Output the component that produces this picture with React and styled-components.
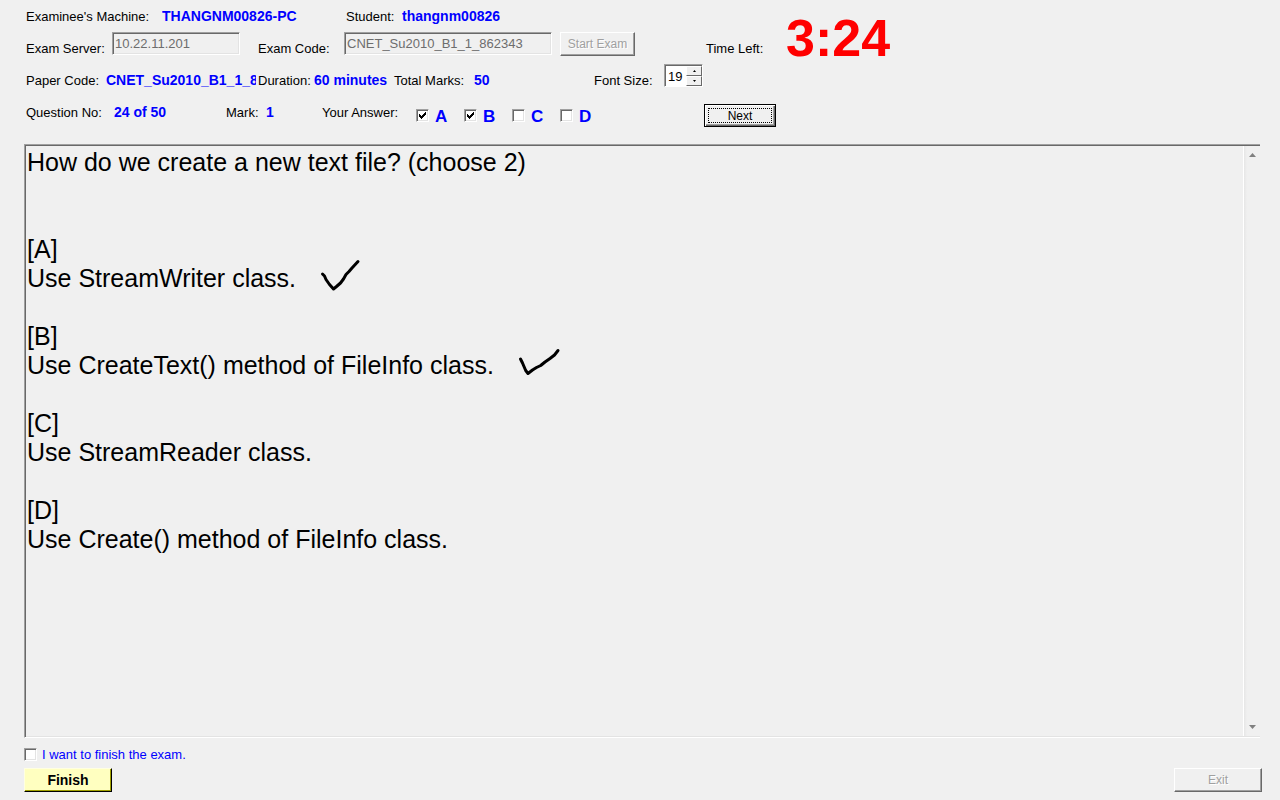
import React, { useState } from "react";
import styled, { createGlobalStyle } from "styled-components";

const GlobalStyle = createGlobalStyle`
  *, *::before, *::after { box-sizing: border-box; }
  body {
    margin: 0;
    background: #f0f0f0;
    color: #000;
    font-family: "Liberation Sans", Arial, sans-serif;
    font-size: 13px;
  }
  button, input { font-family: inherit; margin: 0; }
`;

const Page = styled.main`
  display: flex;
  flex-direction: column;
  min-height: 100vh;
`;

const Header = styled.header`
  display: flex;
  padding: 0 0 16px 26px;
`;

const Details = styled.div`
  flex: none;
  width: 678px;
`;

const Row = styled.div`
  display: flex;
  align-items: flex-start;
  height: 32px;
  line-height: 34px;
  white-space: nowrap;
`;

const Label = styled.label`
  flex: none;
  width: ${(p) => p.$w}px;
`;

const Value = styled.strong`
  flex: none;
  width: ${(p) => (p.$w ? `${p.$w}px` : "auto")};
  overflow: hidden;
  color: #0000ff;
  font-size: 14px;
  line-height: 32px;
`;

const Gap = styled.span`
  flex: none;
  width: ${(p) => p.$w}px;
`;

const TextField = styled.input`
  flex: none;
  width: ${(p) => p.$w}px;
  height: 23px;
  padding: 0 2px;
  border: 1px solid;
  border-color: #a0a0a0 #fff #fff #a0a0a0;
  box-shadow: inset 1px 1px 0 #696969, inset -1px -1px 0 #e3e3e3;
  background: #f0f0f0;
  color: #6d6d6d;
  font-size: 13px;
`;

const Button = styled.button`
  flex: none;
  width: ${(p) => p.$w}px;
  height: 24px;
  padding: 0;
  border: 1px solid;
  border-color: #fff #696969 #696969 #fff;
  border-radius: 0;
  box-shadow: inset -1px -1px 0 #a0a0a0;
  background: #f0f0f0;
  color: #000;
  font-size: 12px;
  line-height: 20px;

  &:disabled {
    color: #a0a0a0;
    text-shadow: 1px 1px 0 #fff;
  }
`;

const FinishButton = styled(Button)`
  border-color: #ffffe1 #000 #000 #ffffe1;
  box-shadow: inset -1px -1px 0 #a0a000;
  background: #ffffc0;
  font-size: 14px;
  font-weight: bold;
`;

const DefaultButton = styled(Button)`
  height: 23px;
  border-color: #000;
  box-shadow: inset 1px 1px 0 #fff, inset -1px -1px 0 #696969, inset -2px -2px 0 #a0a0a0;
  padding: 3px;

  span {
    display: block;
    height: 15px;
    border: 1px dotted #000;
    line-height: 14px;
  }
`;

const Spinner = styled.div`
  display: flex;
  width: 39px;
  height: 23px;
  border: 1px solid;
  border-color: #a0a0a0 #fff #fff #a0a0a0;
  background: #fff;
  box-shadow: inset 1px 1px 0 #696969;
  padding: 1px 0 0 1px;

  input {
    width: 20px;
    padding: 0 0 0 2px;
    border: 0;
    background: transparent;
    font-size: 13px;
  }
`;

const SpinButtons = styled.div`
  display: flex;
  flex-direction: column;
  width: 16px;

  button {
    display: grid;
    place-items: center;
    flex: 1;
    padding: 0;
    border: 1px solid;
    border-color: #fff #696969 #696969 #fff;
    background: #f0f0f0;
  }
`;

const Answers = styled.div`
  display: flex;
  height: 32px;
  padding-top: 8px;
`;

const Answer = styled.label`
  display: flex;
  align-items: flex-start;
  gap: 6px;
  width: 48px;
  height: 24px;
  color: #0000ff;
  font-size: 17px;
  font-weight: bold;
  line-height: 26px;

  > span { margin-top: 5px; }
`;

const BoxWrap = styled.span`
  display: grid;
  flex: none;
  width: 13px;
  height: 13px;

  input, svg {
    grid-area: 1 / 1;
    width: 13px;
    height: 13px;
  }
  input {
    appearance: none;
    border: 1px solid;
    border-color: #a0a0a0 #fff #fff #a0a0a0;
    box-shadow: inset 1px 1px 0 #696969, inset -1px -1px 0 #e3e3e3;
    background: #fff;
  }
  svg { pointer-events: none; visibility: hidden; z-index: 1; }
  input:checked + svg { visibility: visible; }
`;

const Timing = styled.div`
  display: flex;
  flex-direction: column;
`;

const Clock = styled.div`
  display: flex;
  align-items: flex-end;
  height: 64px;
  padding-left: 2px;
  line-height: 30px;
`;

const Remaining = styled.strong`
  align-self: flex-start;
  height: 64px;
  color: #ff0000;
  font-size: 52px;
  line-height: 76px;
`;

const NextSlot = styled.div`
  padding-top: 40px;
`;

const Panel = styled.section`
  display: flex;
  flex: 1;
  margin: 0 20px 0 24px;
  border: solid;
  border-width: 1px 0 1px 1px;
  border-color: #a0a0a0 #fff #fff #a0a0a0;
  box-shadow: inset 1px 1px 0 #696969, inset 0 -1px 0 #e3e3e3;
`;

const Question = styled.article`
  flex: 1;
  padding: 3px 2px;
  font-size: 25px;
  line-height: 29px;

  p { margin: 0; }
`;

const Prompt = styled.p`
  padding-bottom: 58px;
`;

const Choice = styled.div`
  height: 87px;
`;

const ChoiceText = styled.p`
  display: flex;
  align-items: center;
  gap: 25px;
  height: 29px;
`;

const ScrollBar = styled.div`
  display: flex;
  flex-direction: column;
  justify-content: space-between;
  width: 17px;
  margin: 1px 0;
  border-left: 1px solid #fff;
  background: linear-gradient(to right, #e6e6e6, #f0f0f0 3px);

  button {
    display: grid;
    place-items: center;
    height: 18px;
    padding: 0;
    border: 0;
    background: transparent;
  }
`;

const Footer = styled.footer`
  padding: 8px 18px 8px 24px;
`;

const Confirm = styled.label`
  display: flex;
  align-items: center;
  gap: 5px;
  width: fit-content;
  height: 16px;
  color: #0000ff;
`;

const Actions = styled.div`
  display: flex;
  justify-content: space-between;
  padding-top: 6px;
`;

const strokes = {
  A: "M1.5 14 3.5 16 5 19.5 8.500 24.5 12.5 29 15.500 26.500 19.5 23 22.500 19 25 14.5 28 11.500 31 8 37 1.500",
  B: "M1.500 12 3.500 16 6.700 23.500 9 26.500 13.500 23 17.500 20.500 21.700 18.500 26 15 31 11.500 35.500 8 39 3.500",
};

function HandTick({ d }) {
  return (
    <svg width="40" height="38" viewBox="0 0 40 38" overflow="visible" fill="none" stroke="#000" strokeWidth="3" strokeLinecap="round" strokeLinejoin="round" aria-hidden="true">
      <path d={d} />
    </svg>
  );
}

function CheckBox(props) {
  return (
    <BoxWrap>
      <input type="checkbox" {...props} />
      <svg viewBox="0 0 13 13" aria-hidden="true" shapeRendering="crispEdges">
        <path d="M3 5v3h1v1h1v1h1V9h1V8h1V7h1V6h1V3H9v1H8v1H7v1H6v1H5V6H4V5z" fill="#000" />
      </svg>
    </BoxWrap>
  );
}

function Arrow({ down, size = 3, color = "#000" }) {
  const w = size * 2 - 1;
  const d = down ? `M0 0h${w}L${w / 2} ${size}z` : `M0 ${size}h${w}L${w / 2} 0z`;
  return (
    <svg width={w} height={size} viewBox={`0 0 ${w} ${size}`} aria-hidden="true">
      <path d={d} fill={color} />
    </svg>
  );
}

const choices = [
  { key: "A", text: "Use StreamWriter class.", ticked: true },
  { key: "B", text: "Use CreateText() method of FileInfo class.", ticked: true },
  { key: "C", text: "Use StreamReader class." },
  { key: "D", text: "Use Create() method of FileInfo class." },
];

export default function App() {
  const [picked, setPicked] = useState({ A: true, B: true });
  const [size, setSize] = useState(19);
  const toggle = (key) => setPicked((p) => ({ ...p, [key]: !p[key] }));

  return (
    <Page>
      <GlobalStyle />
      <Header>
        <Details>
          <Row>
            <Label as="span" $w={136}>Examinee's Machine:</Label>
            <Value $w={184}>THANGNM00826-PC</Value>
            <Label as="span" $w={56}>Student:</Label>
            <Value>thangnm00826</Value>
          </Row>
          <Row>
            <Label $w={86} htmlFor="server">Exam Server:</Label>
            <TextField id="server" $w={128} defaultValue="10.22.11.201" disabled />
            <Gap $w={18} />
            <Label $w={86} htmlFor="code">Exam Code:</Label>
            <TextField id="code" $w={208} defaultValue="CNET_Su2010_B1_1_862343" disabled />
            <Gap $w={8} />
            <Button $w={75} disabled>Start Exam</Button>
          </Row>
          <Row>
            <Label as="span" $w={80}>Paper Code:</Label>
            <Value $w={150}>CNET_Su2010_B1_1_862343</Value>
            <Gap $w={2} />
            <Label as="span" $w={56}>Duration:</Label>
            <Value $w={80}>60 minutes</Value>
            <Label as="span" $w={80}>Total Marks:</Label>
            <Value $w={120}>50</Value>
            <Label $w={70} htmlFor="size">Font Size:</Label>
            <Spinner>
              <input id="size" value={size} onChange={(e) => setSize(Number(e.target.value) || 0)} />
              <SpinButtons>
                <button aria-label="Larger" onClick={() => setSize(size + 1)}><Arrow size={2} /></button>
                <button aria-label="Smaller" onClick={() => setSize(size - 1)}><Arrow size={2} down /></button>
              </SpinButtons>
            </Spinner>
          </Row>
          <Row>
            <Label as="span" $w={88}>Question No:</Label>
            <Value $w={112}>24 of 50</Value>
            <Label as="span" $w={40}>Mark:</Label>
            <Value $w={56}>1</Value>
            <Label as="span" $w={94}>Your Answer:</Label>
            <Answers>
              {choices.map(({ key }) => (
                <Answer key={key}>
                  <CheckBox checked={!!picked[key]} onChange={() => toggle(key)} />
                  {key}
                </Answer>
              ))}
            </Answers>
          </Row>
        </Details>
        <Timing>
          <Clock>
            <Label as="span" $w={80}>Time Left:</Label>
            <Remaining>3:24</Remaining>
          </Clock>
          <NextSlot>
            <DefaultButton $w={72}><span>Next</span></DefaultButton>
          </NextSlot>
        </Timing>
      </Header>

      <Panel>
        <Question>
          <Prompt>How do we create a new text file? (choose 2)</Prompt>
          {choices.map(({ key, text, ticked }) => (
            <Choice key={key}>
              <p>[{key}]</p>
              <ChoiceText>
                {text}
                {ticked && <HandTick d={strokes[key]} />}
              </ChoiceText>
            </Choice>
          ))}
        </Question>
        <ScrollBar>
          <button aria-label="Scroll up" disabled><Arrow size={4} color="#808080" /></button>
          <button aria-label="Scroll down" disabled><Arrow size={4} down color="#808080" /></button>
        </ScrollBar>
      </Panel>

      <Footer>
        <Confirm>
          <CheckBox />
          I want to finish the exam.
        </Confirm>
        <Actions>
          <FinishButton $w={88}>Finish</FinishButton>
          <Button $w={88} disabled>Exit</Button>
        </Actions>
      </Footer>
    </Page>
  );
}
